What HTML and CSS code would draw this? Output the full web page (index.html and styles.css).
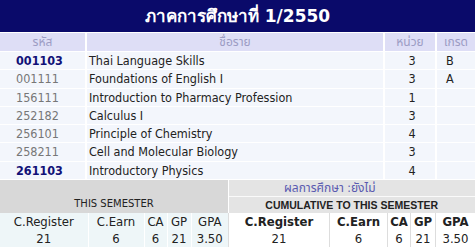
FILE: index.html
```html
<!DOCTYPE html>
<html lang="th">
<head>
<meta charset="utf-8">
<link rel="stylesheet" href="styles.css">
</head>
<body>
<div class="title">ภาคการศึกษาที่ 1/2550</div>
<table class="courses">
  <colgroup><col class="c-code"><col class="c-name"><col class="c-unit"><col class="c-grade"></colgroup>
  <thead>
    <tr><th>รหัส</th><th>ชื่อราย</th><th>หน่วย</th><th>เกรด</th></tr>
  </thead>
  <tbody>
    <tr><td class="code strong">001103</td><td>Thai Language Skills</td><td class="unit">3</td><td class="grade">B</td></tr>
    <tr><td class="code">001111</td><td>Foundations of English I</td><td class="unit">3</td><td class="grade">A</td></tr>
    <tr><td class="code">156111</td><td>Introduction to Pharmacy Profession</td><td class="unit">1</td><td class="grade"></td></tr>
    <tr><td class="code">252182</td><td>Calculus I</td><td class="unit">3</td><td class="grade"></td></tr>
    <tr><td class="code">256101</td><td>Principle of Chemistry</td><td class="unit">4</td><td class="grade"></td></tr>
    <tr><td class="code">258211</td><td>Cell and Molecular Biology</td><td class="unit">3</td><td class="grade"></td></tr>
    <tr><td class="code strong">261103</td><td>Introductory Physics</td><td class="unit">4</td><td class="grade"></td></tr>
  </tbody>
</table>
<div class="summary">
  <table class="sum sem">
    <colgroup><col class="s1"><col class="s2"><col class="s3"><col class="s4"><col></colgroup>
    <tr class="r-head"><td colspan="5" class="semhead">THIS SEMESTER</td></tr>
    <tr class="lab"><td>C.Register</td><td>C.Earn</td><td>CA</td><td>GP</td><td>GPA</td></tr>
    <tr class="val"><td>21</td><td>6</td><td>6</td><td>21</td><td>3.50</td></tr>
  </table>
  <table class="sum cum">
    <colgroup><col class="k1"><col class="k2"><col class="k3"><col class="k4"><col></colgroup>
    <tr class="r-status"><td colspan="5" class="status">ผลการศึกษา :ยังไม่</td></tr>
    <tr class="r-cum"><td colspan="5" class="cumhead">CUMULATIVE TO THIS SEMESTER</td></tr>
    <tr class="lab"><td>C.Register</td><td>C.Earn</td><td>CA</td><td>GP</td><td>GPA</td></tr>
    <tr class="val"><td>21</td><td>6</td><td>6</td><td>21</td><td>3.50</td></tr>
  </table>
</div>
</body>
</html>
```
FILE: styles.css
```css
html, body { margin: 0; padding: 0; background: #fff; }
body {
  width: 475px;
  font-family: "DejaVu Sans Condensed", "DejaVu Sans", "Noto Sans Thai", sans-serif;
  font-size: 12.5px;
  color: #222;
}
.title {
  height: 32px;
  line-height: 32px;
  background: #0a0a6a;
  color: #fff;
  text-align: center;
  font-family: "DejaVu Sans", sans-serif;
  font-size: 17px;
  font-weight: bold;
}
.courses {
  border-collapse: separate;
  border-spacing: 2px 1px;
  margin: 0 -2px;
  table-layout: fixed;
  width: 479px;
}
.c-code { width: 85px; }
.c-unit { width: 50px; }
.c-grade { width: 38px; }
.courses th {
  height: 18px;
  padding: 0;
  background: #dedef6;
  color: #9c9cc4;
  font-weight: normal;
  font-size: 12px;
}
.courses td {
  height: 17.28px;
  padding: 0 0 0 2px;
  background: #f3f6fc;
  white-space: nowrap;
}
.courses td.code { padding-left: 16px; color: #777; }
.courses td.code.strong { color: #111177; font-weight: bold; }
.courses td.unit { text-align: center; padding-left: 4px; }
.courses td.grade { padding-left: 9px; }
.summary { display: flex; }
.sum {
  border-collapse: collapse;
  table-layout: fixed;
}
.sem { width: 228px; }
.cum { width: 247px; }
.s1 { width: 88px; } .s2 { width: 56px; } .s3 { width: 23px; } .s4 { width: 24px; }
.k1 { width: 101px; } .k2 { width: 58px; } .k3 { width: 23px; } .k4 { width: 25px; }
.sum td { padding: 0; text-align: center; line-height: 15px; }
.r-head { height: 33px; }
.r-status { height: 17px; }
.r-cum { height: 16px; }
.sum .lab, .sum .val { height: 17px; }
.sum .semhead {
  background: #d8d8d8;
  vertical-align: bottom;
  font-family: "DejaVu Sans", sans-serif;
  font-size: 10px;
  padding-bottom: 2px;
  color: #222;
}
.sum .status {
  background: #e4e4e4;
  color: #5a5ab0;
  border-bottom: 1px solid #fafafa;
  padding-right: 44px;
  font-size: 12px;
}
.sum .cumhead {
  background: #e4e4e4;
  font-weight: bold;
  font-family: "Liberation Sans", sans-serif;
  font-size: 10.5px;
}
.sum .lab td, .sum .val td { font-size: 13px; }
.sem .lab td, .sem .val td { background: #eef6f8; border-left: 1px solid #fff; }
.sem .lab td:first-child, .sem .val td:first-child { border-left: 0; }
.cum .lab td { font-weight: bold; background: #fff; border-left: 1px solid #ddd; }
.cum .val td { background: #fff; border-left: 1px solid #ddd; }
```
